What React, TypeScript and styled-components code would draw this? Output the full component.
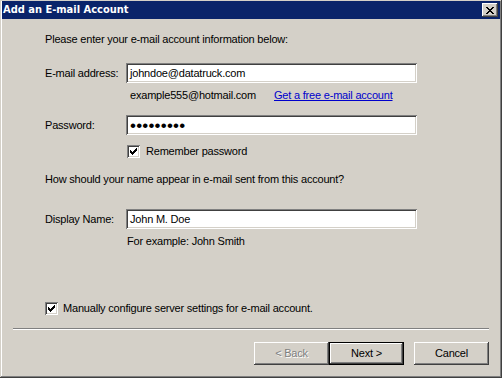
import React from "react";
import styled, { createGlobalStyle } from "styled-components";

const Global = createGlobalStyle`
  html, body { margin: 0; padding: 0; background: #d4d0c8; }
  body { font-family: "Liberation Sans", Arial, sans-serif; font-size: 11px; letter-spacing: -0.2px; color: #000; }
  * { box-sizing: border-box; }
`;

const Window = styled.div`
  width: 502px;
  height: 378px;
  background: #d4d0c8;
  display: flex;
  flex-direction: column;
  padding: 1px 2px 2px 2px;
  box-shadow: inset -1px -1px #404040, inset 1px 1px #d4d0c8,
    inset -2px -2px #808080, inset 2px 2px #ffffff;
`;

const TitleBar = styled.div`
  height: 18px;
  flex: none;
  background: #0a246a;
  display: flex;
  align-items: center;
  justify-content: space-between;
  padding: 0 2px 0 1px;
`;

const Title = styled.span`
  font-family: "DejaVu Sans Condensed", "DejaVu Sans", sans-serif;
  font-weight: bold;
  font-size: 11px;
  letter-spacing: 0;
  color: #ffffff;
  line-height: 18px;
`;

const CloseButton = styled.div`
  width: 16px;
  height: 14px;
  background: #d4d0c8;
  display: flex;
  align-items: center;
  justify-content: center;
  box-shadow: inset -1px -1px #404040, inset 1px 1px #ffffff,
    inset -2px -2px #808080, inset 2px 2px #d4d0c8;
`;

const Content = styled.div`
  display: flex;
  flex-direction: column;
  padding-left: 43px;
`;

const TextLine = styled.div<{ $top: number; $indent?: number }>`
  margin-top: ${(p) => p.$top}px;
  padding-left: ${(p) => p.$indent ?? 0}px;
  line-height: 13px;
  white-space: nowrap;
`;

const FieldRow = styled.div<{ $top: number }>`
  margin-top: ${(p) => p.$top}px;
  display: grid;
  grid-template-columns: 81px 291px;
  align-items: center;
  line-height: 13px;
`;

const Field = styled.div`
  height: 20px;
  background: #ffffff;
  padding: 0 4px;
  display: flex;
  align-items: center;
  white-space: nowrap;
  overflow: hidden;
  box-shadow: inset 1px 1px #808080, inset -1px -1px #ffffff,
    inset 2px 2px #404040, inset -2px -2px #d4d0c8;
`;

const Dots = styled.span`
  font-size: 17px;
  letter-spacing: 0.2px;
  line-height: 16px;
  padding-top: 1px;
`;

const HintRow = styled.div<{ $top: number }>`
  margin-top: ${(p) => p.$top}px;
  padding-left: 85px;
  display: grid;
  grid-template-columns: 144px auto;
  line-height: 13px;
  white-space: nowrap;
`;

const Link = styled.a`
  color: #0000cc;
  text-decoration: underline;
  cursor: pointer;
`;

const CheckRow = styled.label<{ $top: number; $indent?: number }>`
  margin-top: ${(p) => p.$top}px;
  padding-left: ${(p) => p.$indent ?? 0}px;
  display: flex;
  align-items: center;
  gap: ${(p) => (p.$indent ? 6 : 5)}px;
  line-height: 13px;
  white-space: nowrap;
`;

const Box = styled.span`
  width: 13px;
  height: 13px;
  flex: none;
  background: #ffffff;
  display: flex;
  align-items: center;
  justify-content: center;
  box-shadow: inset 1px 1px #808080, inset -1px -1px #ffffff,
    inset 2px 2px #404040, inset -2px -2px #d4d0c8;
`;

const Footer = styled.div`
  display: flex;
  flex-direction: column;
  padding: 0 11px;
`;

const Separator = styled.div`
  margin-top: 13px;
  height: 2px;
  border-top: 1px solid #808080;
  border-bottom: 1px solid #ffffff;
`;

const ButtonRow = styled.div`
  margin-top: 12px;
  display: flex;
  justify-content: flex-end;
`;

const Button = styled.div<{ $default?: boolean; $disabled?: boolean; $gap?: number }>`
  width: 75px;
  height: 23px;
  margin-left: ${(p) => p.$gap ?? 0}px;
  background: #d4d0c8;
  display: flex;
  align-items: center;
  justify-content: center;
  line-height: 13px;
  color: ${(p) => (p.$disabled ? "#808080" : "#000")};
  text-shadow: ${(p) => (p.$disabled ? "1px 1px #ffffff" : "none")};
  box-shadow: ${(p) =>
    p.$default
      ? "inset 0 0 0 1px #000, inset -2px -2px #404040, inset 2px 2px #ffffff, inset -3px -3px #808080"
      : "inset -1px -1px #404040, inset 1px 1px #ffffff, inset -2px -2px #808080"};
`;

const pixels = (rows: string[]) =>
  rows.flatMap((r, y) =>
    r.split("").map((c, x) => (c === "X" ? <rect key={`${x}-${y}`} x={x} y={y} width={1} height={1} /> : null))
  );

const CloseGlyph = () => (
  <svg width="8" height="7" viewBox="0 0 8 7" shapeRendering="crispEdges" fill="#000">
    {pixels(["XX....XX", ".XX..XX.", "..XXXX..", "...XX...", "..XXXX..", ".XX..XX.", "XX....XX"])}
  </svg>
);

const CheckGlyph = () => (
  <svg width="7" height="7" viewBox="0 0 7 7" shapeRendering="crispEdges" fill="#000">
    {pixels(["......X", ".....XX", "X...XXX", "XX.XXX.", "XXXXX..", ".XXX...", "..X...."])}
  </svg>
);

const Checkbox = () => (
  <Box>
    <CheckGlyph />
  </Box>
);

export default function App() {
  return (
    <>
      <Global />
      <Window>
        <TitleBar>
          <Title>Add an E-mail Account</Title>
          <CloseButton>
            <CloseGlyph />
          </CloseButton>
        </TitleBar>
        <Content>
          <TextLine $top={14}>Please enter your e-mail account information below:</TextLine>
          <FieldRow $top={17}>
            <span>E-mail address:</span>
            <Field>johndoe@datatruck.com</Field>
          </FieldRow>
          <HintRow $top={6}>
            <span>example555@hotmail.com</span>
            <Link>Get a free e-mail account</Link>
          </HintRow>
          <FieldRow $top={13}>
            <span>Password:</span>
            <Field>
              <Dots>•••••••••</Dots>
            </Field>
          </FieldRow>
          <CheckRow $top={10} $indent={82}>
            <Checkbox />
            <span>Remember password</span>
          </CheckRow>
          <TextLine $top={15}>How should your name appear in e-mail sent from this account?</TextLine>
          <FieldRow $top={23}>
            <span>Display Name:</span>
            <Field>John M. Doe</Field>
          </FieldRow>
          <TextLine $top={6} $indent={82}>For example: John Smith</TextLine>
          <CheckRow $top={54}>
            <Checkbox />
            <span>Manually configure server settings for e-mail account.</span>
          </CheckRow>
        </Content>
        <Footer>
          <Separator />
          <ButtonRow>
            <Button $disabled>&lt; Back</Button>
            <Button $default>Next &gt;</Button>
            <Button $gap={10}>Cancel</Button>
          </ButtonRow>
        </Footer>
      </Window>
    </>
  );
}
